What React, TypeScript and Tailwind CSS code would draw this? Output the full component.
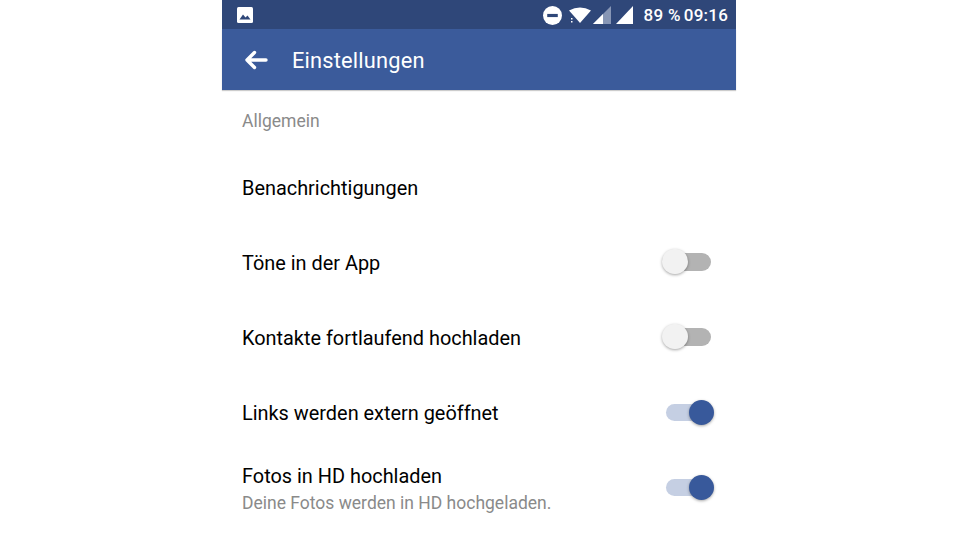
import React from 'react';

const Toggle: React.FC<{ on: boolean }> = ({ on }) => (
  <div className="relative w-[52px] h-[26px] mt-[-1px] shrink-0">
    {on ? (
      <>
        <div className="absolute left-[4px] top-[5px] w-[40px] h-[17px] rounded-full bg-[#c5cfe3]" />
        <div className="absolute left-[27px] top-[1px] w-[25px] h-[25px] rounded-full bg-[#38599b] shadow-[0_1px_3px_rgba(0,0,0,0.35)]" />
      </>
    ) : (
      <>
        <div className="absolute left-[4px] top-[4px] w-[45px] h-[18px] rounded-full bg-[#b3b3b3]" />
        <div className="absolute left-0 top-0 w-[26px] h-[25px] rounded-full bg-[#f2f2f2] shadow-[0_1px_3px_rgba(0,0,0,0.35)]" />
      </>
    )}
  </div>
);

const Row: React.FC<{ label: string; on: boolean; sub?: string }> = ({ label, on, sub }) => (
  <div className="h-[75px] flex items-center justify-between pl-[20px] pr-[22px]">
    <div className={sub ? 'pt-[4px]' : 'pt-[2px]'}>
      <div className="text-[19.9px] leading-[26px] text-black">{label}</div>
      {sub && <div className="mt-[1px] text-[17.5px] leading-[24px] text-[#8a8a8a]">{sub}</div>}
    </div>
    <Toggle on={on} />
  </div>
);

export default function App() {
  return (
    <div className="w-[960px] h-[540px] bg-white flex justify-center overflow-hidden font-['Roboto',sans-serif]">
      <div className="w-[514px] ml-[-2px] flex flex-col">
        <div className="h-[29px] bg-[#2f4779] flex items-center justify-between pt-[1px] pl-[15px] pr-[8px] text-white">
          <svg width="16" height="16" viewBox="0 0 16 16">
            <rect width="16" height="16" rx="1.5" fill="#fff" />
            <path d="M2.5 12.5 L6 7.5 L8.5 10.5 L10.5 8.5 L13.5 12.5 Z" fill="#2f4779" />
          </svg>
          <div className="flex items-center">
            <svg width="19" height="19" viewBox="0 0 18 18">
              <circle cx="9" cy="9" r="9" fill="#fff" />
              <rect x="4" y="7.5" width="10" height="3" fill="#2f4779" />
            </svg>
            <svg className="ml-[7px]" width="22" height="16" viewBox="0 0 22 16">
              <path d="M0 3.5 Q11 -2.5 22 3.5 L11 16 L8 12.5 Z" fill="#fff" />
              <rect x="2" y="11" width="1.5" height="1.5" fill="#fff" />
              <rect x="2" y="14" width="1.5" height="1.5" fill="#fff" />
            </svg>
            <svg className="ml-[2px]" width="18" height="18" viewBox="0 0 18 18">
              <path d="M18 0 V18 H0 Z" fill="#8796b5" />
              <path d="M10 8 V18 H0 Z" fill="#fff" />
            </svg>
            <svg className="ml-[5px]" width="18" height="18" viewBox="0 0 18 18">
              <path d="M17 0 V18 H0 Z" fill="#fff" />
            </svg>
            <span className="ml-[10px] pt-[2px] text-[17px] font-medium tracking-[0.3px]">89 %</span>
            <span className="ml-[3px] pt-[2px] text-[17px] font-medium tracking-[0.2px]">09:16</span>
          </div>
        </div>
        <div className="h-[61px] bg-[#3b5b9b] flex items-center pt-[1px] pl-[22px] text-white shadow-[0_1px_1px_rgba(0,0,0,0.2)]">
          <svg width="24" height="20" viewBox="0 0 24 20" fill="none" stroke="#fff" strokeWidth="3.4" strokeLinecap="round" strokeLinejoin="round">
            <path d="M22 10 H3 M10.5 2.5 L3 10 L10.5 17.5" />
          </svg>
          <span className="ml-[24px] pt-[2px] text-[21.8px] tracking-[0.2px]">Einstellungen</span>
        </div>
        <div className="pl-[20px] pt-[19px] h-[60px] text-[17.5px] leading-[24px] text-[#8a8a8a]">Allgemein</div>
        <div className="h-[75px] flex items-center pt-[2px] pl-[20px] text-[19.9px] text-black">Benachrichtigungen</div>
        <Row label="Töne in der App" on={false} />
        <Row label="Kontakte fortlaufend hochladen" on={false} />
        <Row label="Links werden extern geöffnet" on />
        <Row label="Fotos in HD hochladen" on sub="Deine Fotos werden in HD hochgeladen." />
      </div>
    </div>
  );
}
